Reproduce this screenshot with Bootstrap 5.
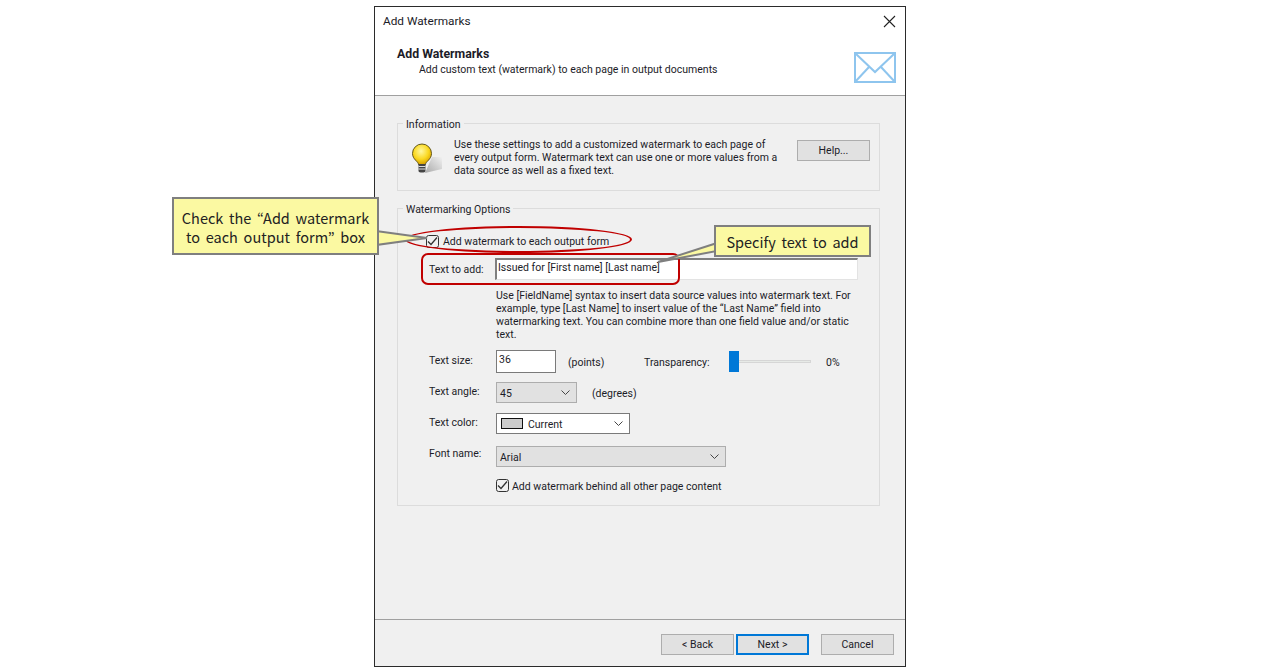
<!DOCTYPE html>
<html lang="en"><head><meta charset="utf-8"><title>Add Watermarks</title>
<link rel="stylesheet" href="https://cdn.jsdelivr.net/npm/bootstrap@5.3.0/dist/css/bootstrap.min.css">
<style>
html,body{height:670px;overflow:hidden;background:#fff}
body{font-family:Roboto,"Open Sans",sans-serif;font-size:10.5px;line-height:13px;color:#1c1c28}
.stage{width:1280px;height:670px;padding-top:6px}
.dlg{width:532px;height:661px;margin-left:374px;border:1px solid #2b2b2b;background:#f0f0f0}
.dlg-top{height:89px;background:#fff;border-bottom:1px solid #a0a0a0;padding:7px 9px 0 8px}
.dlg-title{font-size:11.8px;height:33px;padding-top:1px}
.dlg-head{font-weight:700;padding-left:14px;font-size:12.3px;margin-top:1px}
.dlg-sub{padding-left:36px;padding-top:2px}
.env{margin-top:5px}
.dlg-main{height:524px;padding:27px 25px 0 22px;border-bottom:1px solid #a0a0a0}
.grp{position:relative;border:1px solid #dcdcdc}
.grp-info{height:68px;padding:14px 9px 0 56px;margin-bottom:17px}
.grp-opts{height:298px;padding:26px 0 0 31px}
.grp-leg{position:absolute;left:5px;top:-6px;background:#f0f0f0;padding:0 3px}
.win-btn{width:73px;height:21px;padding:0;font-family:inherit;font-size:10.5px;line-height:19px;color:#1c1c28;background:#e1e1e1;border:1px solid #adadad;border-radius:0;flex:none}
.win-btn.act{border:2px solid #0078d7;line-height:17px}
.chk{width:13px;height:13px;margin:0;flex:none;border:1px solid #333;border-radius:0;background-color:transparent}
.chk.form-check-input:checked{background-color:transparent;border-color:#333;background-size:13px;background-image:url("data:image/svg+xml,%3csvg xmlns='http://www.w3.org/2000/svg' viewBox='0 0 13 13'%3e%3cpath fill='none' stroke='%23333' stroke-width='1.3' d='M2 6.5l3 3 6-7'/%3e%3c/svg%3e")}
.lbl{width:67px;flex:none}
.lbl-up{margin-top:-3px}
.low{margin-top:2px}
.txt-in{height:23px;border:1px solid #7a7a7a;background:#fff;padding:0 2px;line-height:17px}
.txt-long{width:363px;height:22px;border:1px solid #e3e3e3;border-top:2px solid #7f7f7f;border-left:2px solid #7f7f7f;margin-left:-1px;padding:0 1px;line-height:15px}
.chev{background-repeat:no-repeat;background-position:right 6px center;background-size:9px 5px;background-image:url("data:image/svg+xml,%3csvg xmlns='http://www.w3.org/2000/svg' viewBox='0 0 9 5'%3e%3cpath fill='none' stroke='%23444' d='M.5.5l4 4 4-4'/%3e%3c/svg%3e")}
.pick{height:21px;background-color:#e1e1e1;border:1px solid #adadad;padding:3px 0 0 3px;line-height:16px}
.pick-white{background-color:#fff;border-color:#7a7a7a}
.swatch{width:22px;height:11px;background:#ccc;border:1px solid #111;margin-right:5px}
.trk{width:82px;height:3px;background:#e7eae7;border:1px solid #d6d6d6;position:relative}
.thumb{position:absolute;left:-1px;top:-10px;width:10px;height:21px;background:#0078d7}
.call{position:absolute;z-index:3;background:#fbf9a2;border:2px solid #7f7f7f;color:#222;font-family:"Noto Sans CJK KR","Noto Sans",sans-serif;font-size:14.5px;line-height:19px;text-align:center;word-spacing:2.5px}
.call-a{left:172px;top:197px;width:207px;height:58px;padding-top:9px}
.call-b{left:714px;top:225px;width:157px;height:32px;padding-top:5px}
.ring{position:absolute;z-index:1;border:2px solid #c00000}
.ring-o{left:405px;top:226px;width:227px;height:27px;border-radius:50%}
.ring-r{left:421px;top:253px;width:259px;height:32px;border-radius:7px}
.tails{position:absolute;left:0;top:0;z-index:2;pointer-events:none}
</style></head><body>
<div class="stage position-relative">
<div class="dlg d-flex flex-column">
 <div class="dlg-top position-relative">
  <div class="dlg-title d-flex justify-content-between"><span>Add Watermarks</span>
   <svg width="13" height="13" viewBox="0 0 13 13"><path d="M1 1l11 11M12 1L1 12" stroke="#222" stroke-width="1.1" fill="none"/></svg></div>
  <div class="d-flex justify-content-between">
   <div><div class="dlg-head">Add Watermarks</div><div class="dlg-sub">Add custom text (watermark) to each page in output documents</div></div>
   <svg class="env" width="42" height="31" viewBox="0 0 42 31"><g fill="none" stroke="#8ec5ee" stroke-width="2"><rect x="1" y="1" width="40" height="29"/><path d="M1 1l20 19L41 1M1 30l14-15M41 30L27 15"/></g></svg>
  </div>
 </div>
 <div class="dlg-main">
  <div class="grp grp-info d-flex justify-content-between">
   <span class="grp-leg">Information</span>
   <svg class="position-absolute" style="left:14px;top:19px" width="36" height="34" viewBox="0 0 36 34"><defs><radialGradient id="b" cx=".45" cy=".35" r=".65"><stop offset="0" stop-color="#fff8a0"/><stop offset=".6" stop-color="#fad820"/><stop offset="1" stop-color="#d8a000"/></radialGradient><linearGradient id="s" x1="0" y1="1" x2="1" y2="0"><stop offset="0" stop-color="#aaa"/><stop offset="1" stop-color="#f0f0f0"/></linearGradient></defs><path d="M13 30L20 14h10v12z" fill="url(#s)"/><path d="M6 21c0-3-6-5-6-11a9.500 9.500 0 0 1 19 0c0 6-6 8-6 11z" transform="translate(.5 .5)" fill="url(#b)" stroke="#554a10" stroke-width=".9"/><path d="M6.500 21h7v7c0 2-7 2-7 0z" fill="#444"/><path d="M6.500 23.500h7M6.500 26h7" stroke="#ddd"/></svg>
   <div style="width:332px">Use these settings to add a customized watermark to each page of every output form. Watermark text can use one or more values from a data source as well as a fixed text.</div>
   <button type="button" class="btn win-btn" style="margin-top:2px">Help...</button>
  </div>
  <div class="grp grp-opts">
   <span class="grp-leg">Watermarking Options</span>
   <div class="d-flex align-items-center" style="height:13px;margin-left:-3px;gap:4px"><input class="form-check-input chk" type="checkbox" checked aria-label="Add watermark"><span>Add watermark to each output form</span></div>
   <div class="d-flex align-items-center" style="margin-top:10px"><div class="lbl">Text to add:</div><div class="txt-in txt-long">Issued for [First name] [Last name]</div></div>
   <div style="margin:9px 0 0 67px;width:362px">Use [FieldName] syntax to insert data source values into watermark text. For example, type [Last Name] to insert value of the “Last Name” field into watermarking text. You can combine more than one field value and/or static text.</div>
   <div class="d-flex align-items-center" style="margin-top:9px"><div class="lbl lbl-up">Text size:</div><div class="txt-in" style="width:60px">36</div><span class="low" style="margin-left:12px;width:76px">(points)</span><span class="low" style="width:85px">Transparency:</span><div class="trk"><div class="thumb"></div></div><span class="low" style="margin-left:15px">0%</span></div>
   <div class="d-flex align-items-center" style="margin-top:9px"><div class="lbl lbl-up">Text angle:</div><div class="pick chev" style="width:81px">45</div><span class="low" style="margin-left:15px">(degrees)</span></div>
   <div class="d-flex align-items-center" style="margin-top:10px"><div class="lbl lbl-up">Text color:</div><div class="pick pick-white chev d-flex align-items-center" style="width:134px;padding:2px 0 0 4px"><span class="swatch" style="margin-top:-2px"></span><span>Current</span></div></div>
   <div class="d-flex align-items-center" style="margin-top:12px"><div class="lbl" style="margin-top:-6px">Font name:</div><div class="pick chev" style="width:230px">Arial</div></div>
   <div class="d-flex align-items-center" style="margin:11px 0 0 67px;gap:3px"><input class="form-check-input chk" type="checkbox" checked aria-label="Behind"><span class="low">Add watermark behind all other page content</span></div>
  </div>
 </div>
 <div class="d-flex" style="padding:14px 0 0 286px">
  <button type="button" class="btn win-btn">&lt; Back</button>
  <button type="button" class="btn win-btn act" style="margin-left:2px">Next &gt;</button>
  <button type="button" class="btn win-btn" style="margin-left:12px">Cancel</button>
 </div>
</div>
<div class="ring ring-o"></div><div class="ring ring-r"></div>
<svg class="tails" width="1280" height="670"><g fill="#fbf9a2" stroke="#7f7f7f" stroke-width="2"><path d="M376 231L427 238 376 245z"/><path d="M717 243L658 262 717 251z"/></g></svg>
<div class="call call-a">Check the “Add watermark<br>to each output form” box</div>
<div class="call call-b">Specify text to add</div>
</div>
</body></html>
